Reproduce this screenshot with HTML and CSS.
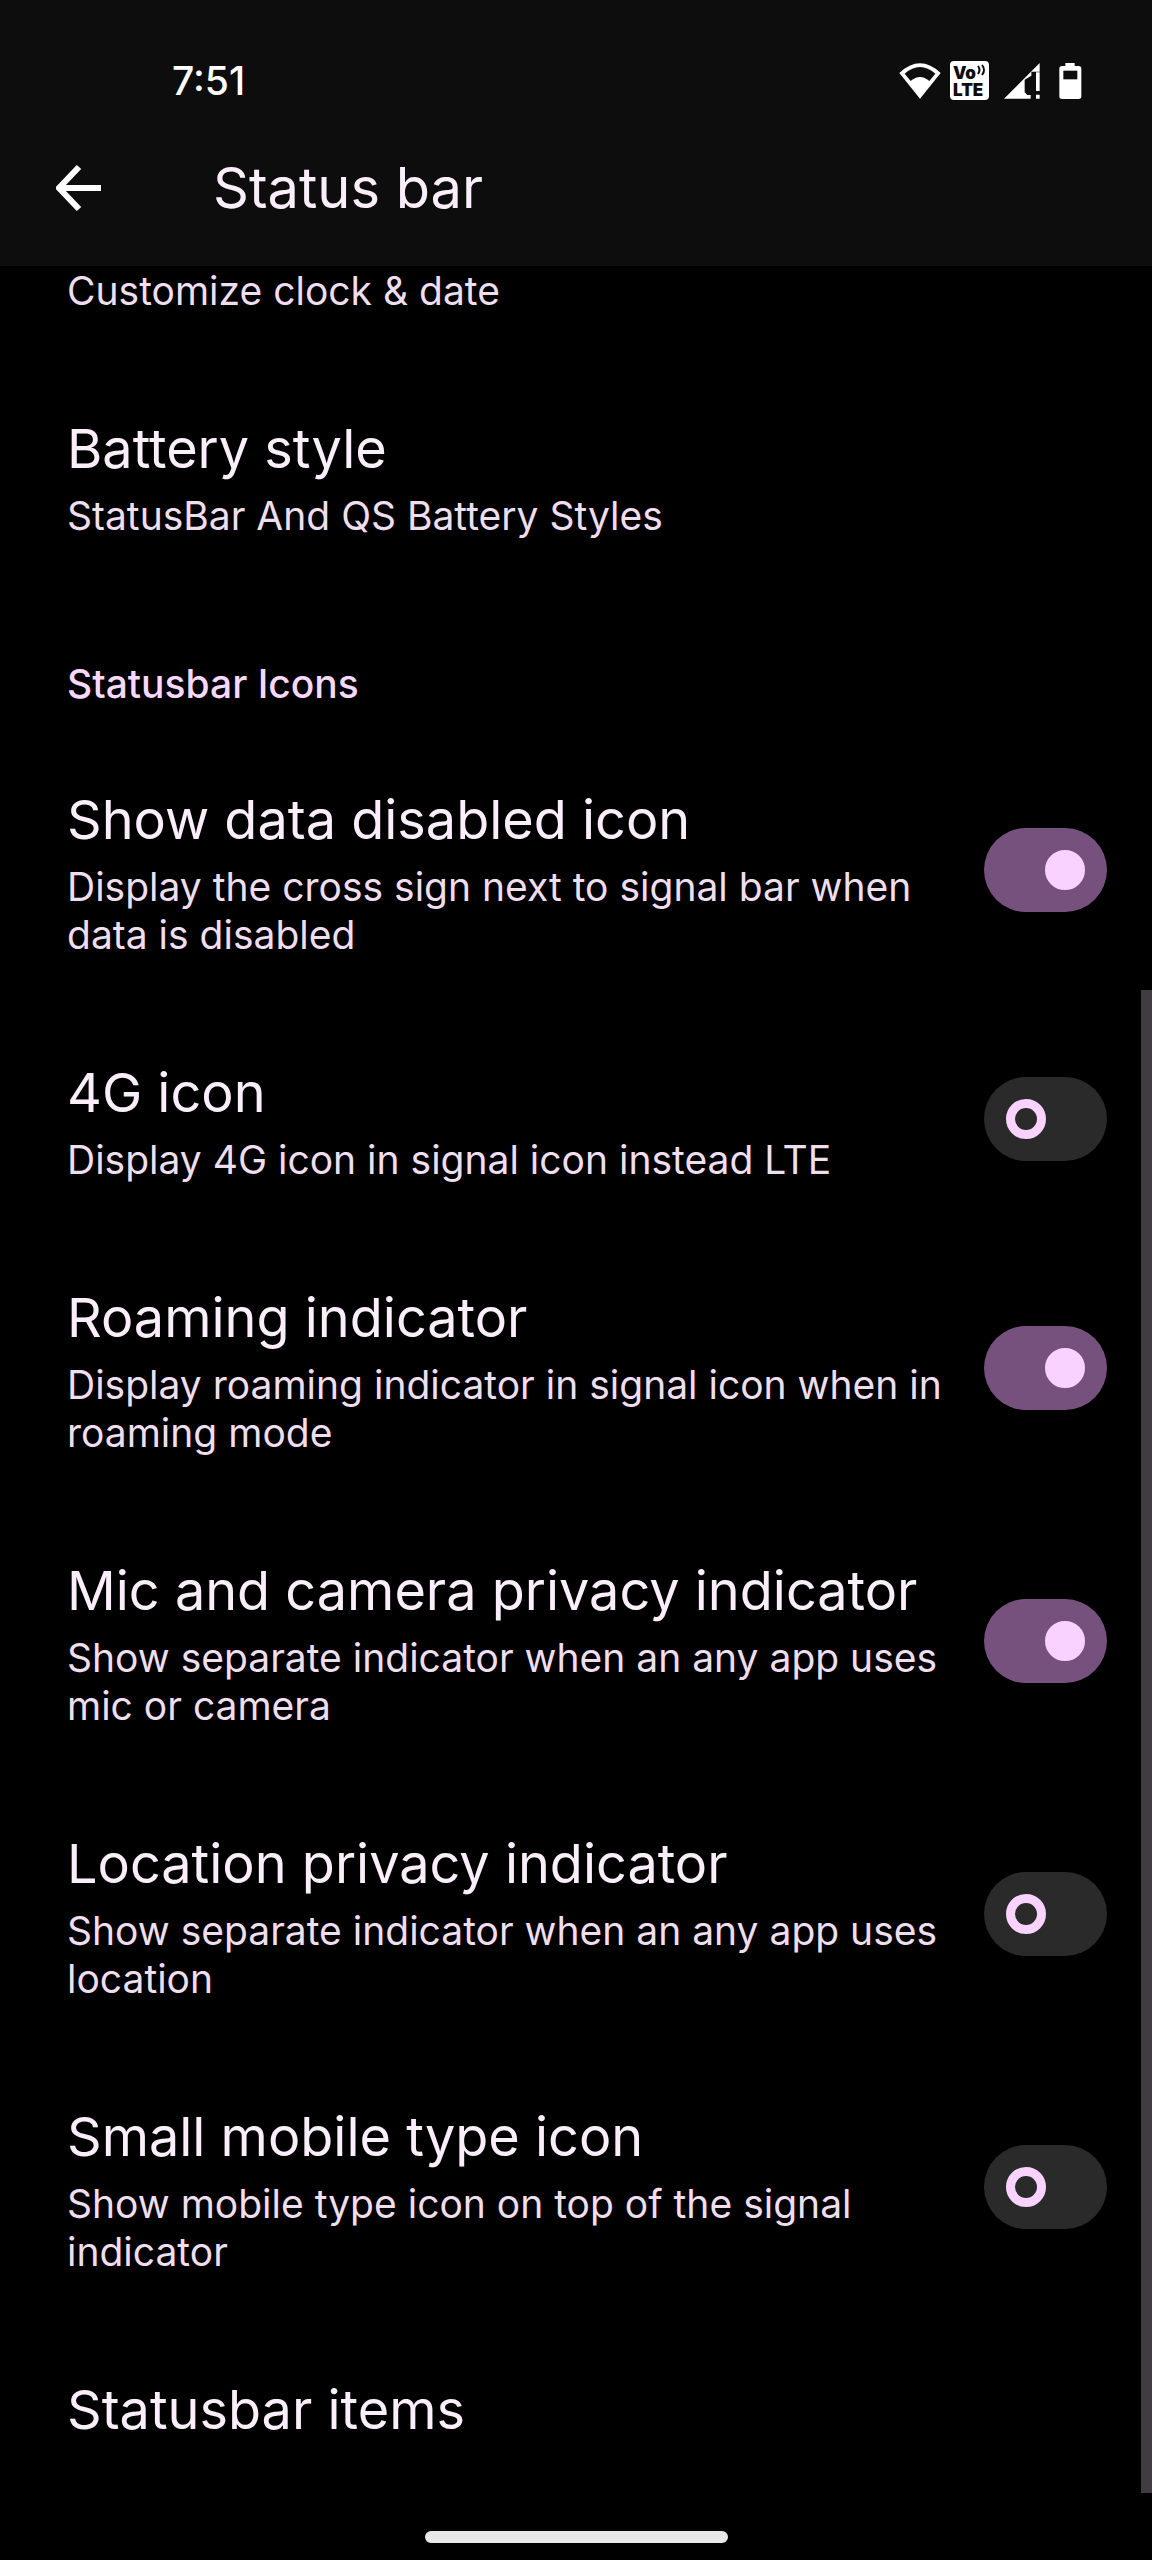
FILE: index.html
```html
<!DOCTYPE html>
<html lang="en">
<head>
  <meta charset="UTF-8">
  <meta name="viewport" content="width=device-width, initial-scale=1">
  <title>Status bar</title>
  <link rel="stylesheet" href="styles.css">
</head>
<body>

  <header class="header">
    <div class="statusbar">
      <span class="clock">7:51</span>
      <div class="icons">
        <svg width="42" height="36" viewBox="0 0 126 108">
          <path d="M1 30Q63-28 125 30L63 107Z" fill="#fff"/>
          <path d="M17 32Q63-8 109 32L91 54Q63 30 35 54Z" fill="#0d0d0d"/>
        </svg>
        <svg class="volte" width="40" height="40" viewBox="0 0 40 40">
          <rect width="39" height="39" x="0" y="0" rx="4" fill="#fff"/>
          <text x="3" y="18">Vo</text>
          <text x="3" y="35">LTE</text>
          <path d="M28 5q3 4 0 8M32 4q4 5 0 10" fill="none" stroke="#0d0d0d" stroke-width="2"/>
        </svg>
        <svg class="signal" width="36" height="36" viewBox="0 0 108 108">
          <path d="M107 0V26H82V38L62 50V88L70 96H80V107H0Z" fill="#fff"/>
          <path d="M96 28H107V84H96ZM96 95H107V107H96Z" fill="#fff"/>
        </svg>
        <svg class="battery" width="23" height="36" viewBox="0 0 69 108">
          <path d="M19 0H47V9H59Q67 9 67 17V100Q67 108 59 108H9Q1 108 1 100V17Q1 9 9 9H19Z" fill="#fff"/>
          <path d="M13 23H55V49H13Z" fill="#0d0d0d"/>
        </svg>
      </div>
    </div>
    <div class="toolbar">
      <button class="back" type="button" aria-label="Back">
        <svg width="46" height="46" viewBox="0 0 46 46">
          <path d="M45 23H5M23 2L3 23L23 44" fill="none" stroke="#fff" stroke-width="6"/>
        </svg>
      </button>
      <h1>Status bar</h1>
    </div>
  </header>

  <main class="list">
    <div class="row row-first">
      <p class="summary">Customize clock &amp; date</p>
    </div>
    <div class="row">
      <div class="text">
        <h2 class="title">Battery style</h2>
        <p class="summary">StatusBar And QS Battery Styles</p>
      </div>
    </div>

    <h2 class="category">Statusbar Icons</h2>

    <label class="row">
      <span class="text">
        <span class="title">Show data disabled icon</span>
        <span class="summary">Display the cross sign next to signal bar when data is disabled</span>
      </span>
      <input class="switch" type="checkbox" checked>
    </label>
    <label class="row">
      <span class="text">
        <span class="title">4G icon</span>
        <span class="summary">Display 4G icon in signal icon instead LTE</span>
      </span>
      <input class="switch" type="checkbox">
    </label>
    <label class="row">
      <span class="text">
        <span class="title">Roaming indicator</span>
        <span class="summary">Display roaming indicator in signal icon when in roaming mode</span>
      </span>
      <input class="switch" type="checkbox" checked>
    </label>
    <label class="row">
      <span class="text">
        <span class="title">Mic and camera privacy indicator</span>
        <span class="summary">Show separate indicator when an any app uses mic or camera</span>
      </span>
      <input class="switch" type="checkbox" checked>
    </label>
    <label class="row">
      <span class="text">
        <span class="title">Location privacy indicator</span>
        <span class="summary">Show separate indicator when an any app uses location</span>
      </span>
      <input class="switch" type="checkbox">
    </label>
    <label class="row">
      <span class="text">
        <span class="title">Small mobile type icon</span>
        <span class="summary">Show mobile type icon on top of the signal indicator</span>
      </span>
      <input class="switch" type="checkbox">
    </label>
    <div class="row">
      <h2 class="title">Statusbar items</h2>
    </div>
    <div class="scrollbar"></div>
  </main>

  <footer class="navbar">
    <div class="handle"></div>
  </footer>

</body>
</html>
```

FILE: styles.css
```css
* {
  box-sizing: border-box;
}
body {
  margin: 0;
  background: #000;
  color: #fbeefb;
  font-family: Inter, Roboto, sans-serif;
}
h1, h2, p {
  margin: 0;
  font-weight: 400;
}
.header {
  background: #0d0d0d;
}
.statusbar {
  display: flex;
  justify-content: space-between;
  align-items: center;
  padding: 57px 70px 0 172px;
}
.clock {
  color: #fff;
  font-size: 39px;
  line-height: 48px;
  font-weight: 500;
}
.icons {
  display: flex;
  align-items: center;
  gap: 9px;
}
.volte text {
  font-size: 17px;
  font-weight: 900;
  fill: #0d0d0d;
}
.signal {
  margin-left: 5px;
}
.battery {
  margin-left: 10px;
}
.toolbar {
  display: flex;
  align-items: center;
  gap: 111px;
  padding: 49px 56px 44px;
}
.back {
  display: flex;
  padding: 0;
  border: none;
  background: none;
  cursor: pointer;
}
.toolbar h1 {
  font-size: 56px;
  line-height: 68px;
}
.list {
  position: relative;
}
.row {
  display: flex;
  align-items: center;
  justify-content: space-between;
  gap: 40px;
  padding: 48px 45px 47px 67px;
}
.row-first {
  padding-top: 1px;
}
.text {
  flex: 1;
}
.title {
  display: block;
  margin-bottom: 4px;
  font-size: 54px;
  line-height: 78px;
}
.summary {
  display: block;
  color: #eedeee;
  font-size: 39px;
  line-height: 48px;
}
.category {
  padding: 73px 67px 25px;
  color: #f8d8fc;
  font-size: 39px;
  line-height: 48px;
  font-weight: 500;
}
.switch {
  appearance: none;
  display: flex;
  align-items: center;
  flex: none;
  width: 123px;
  height: 84px;
  margin: 0;
  padding: 0 22px;
  border-radius: 42px;
  background: #2a2a2a;
  cursor: pointer;
}
.switch::before {
  content: "";
  box-sizing: border-box;
  width: 40px;
  height: 40px;
  border: 9px solid #f9d2ff;
  border-radius: 50%;
}
.switch:checked {
  justify-content: flex-end;
  background: #77517e;
}
.switch:checked::before {
  background: #f9d2ff;
}
.scrollbar {
  position: absolute;
  top: 724px;
  right: 0;
  bottom: 7px;
  width: 11px;
  background: #403c41;
}
.navbar {
  display: flex;
  justify-content: center;
  padding: 31px 0 17px;
}
.handle {
  width: 303px;
  height: 12px;
  border-radius: 6px;
  background: #e8e8e8;
}
```
